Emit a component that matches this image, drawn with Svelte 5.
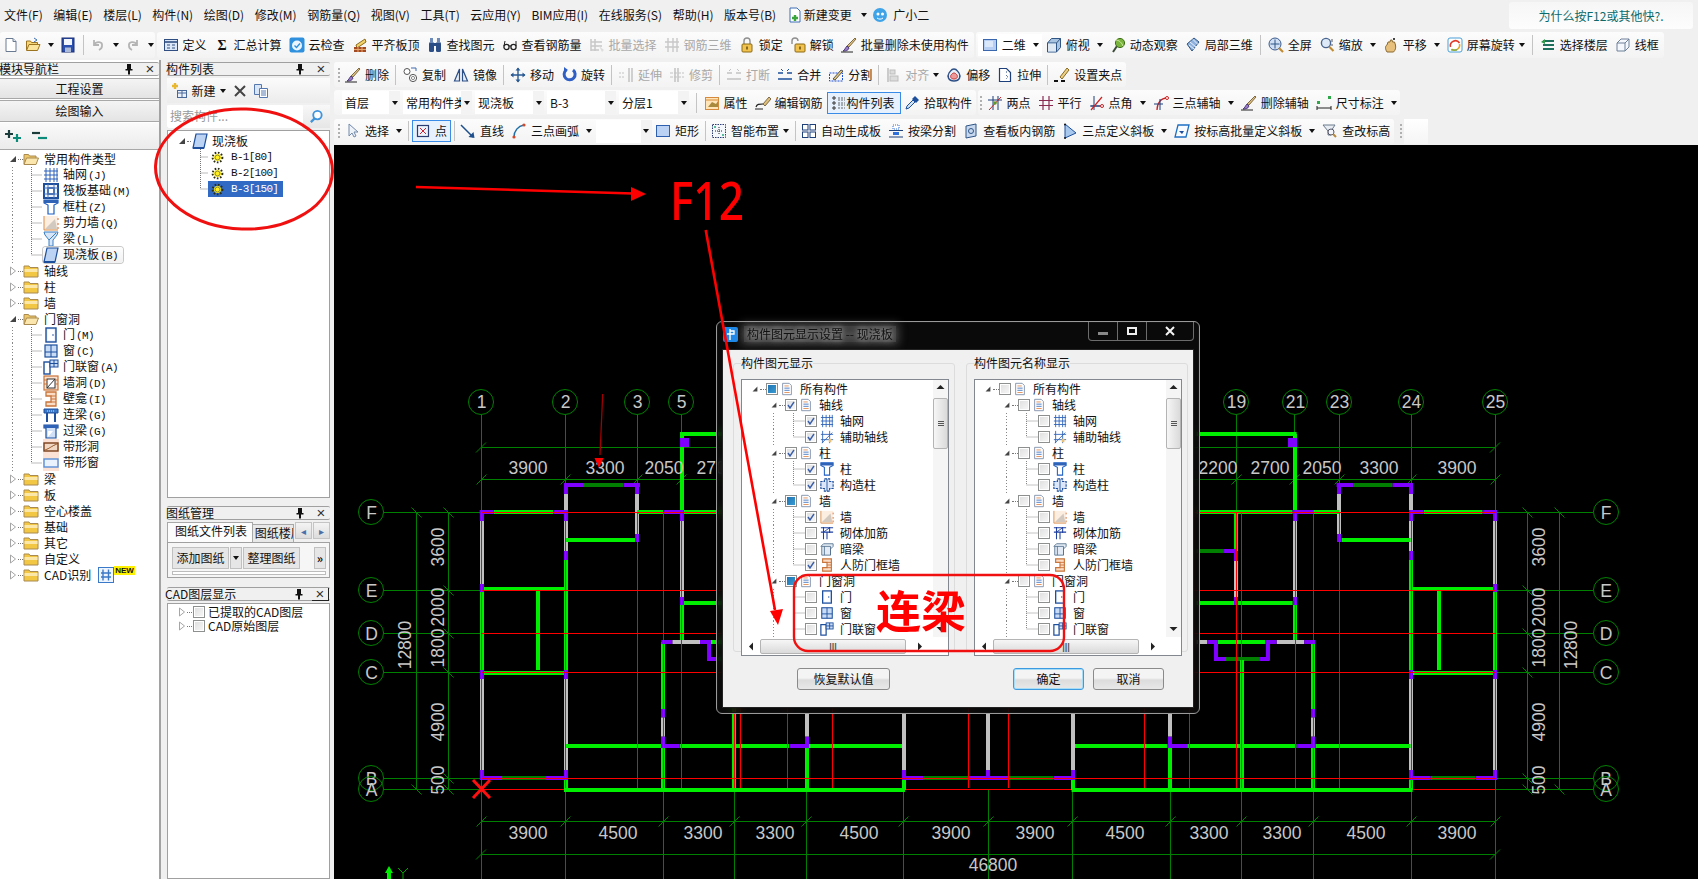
<script>
  const I = {
    doc: '<path d="M3 1.5h7l3 3v10H3z" fill="#fff" stroke="#6b7a93"/><path d="M10 1.5v3h3" fill="#dfe6f0" stroke="#6b7a93"/>',
    open: '<path d="M1.5 13V4h4l1 1.5h6V8" fill="#f6d678" stroke="#9c7420"/><path d="M1.5 13.5l2.5-6h11l-2.5 6z" fill="#fbe59c" stroke="#9c7420"/><path d="M9 1l3 2-3 2" fill="none" stroke="#3c6fb4"/>',
    save: '<rect x="2" y="1" width="12" height="14" fill="#2a4fae" stroke="#1a2f72"/><rect x="4" y="2" width="8" height="6" fill="#f2f5fb"/><rect x="5" y="10.5" width="6" height="4.5" fill="#aebbd8"/>',
    undo: '<path d="M4 3v5h5M4 8c2-4 9-4 8 1 0 2-1 3-3 4" fill="none" stroke="#b4b4b4" stroke-width="1.8"/>',
    redo: '<path d="M12 3v5H7M12 8c-2-4-9-4-8 1 0 2 1 3 3 4" fill="none" stroke="#b4b4b4" stroke-width="1.8"/>',
    define: '<rect x="1.5" y="2.5" width="13" height="11" fill="#dce7f7" stroke="#2f4d80"/><path d="M2 5h12" stroke="#2f4d80" stroke-width="1.6"/><path d="M4 8h3M9 8h3M4 11h3M9 11h3" stroke="#2f4d80"/>',
    sigma: '<text x="8" y="13" text-anchor="middle" font-size="14" font-weight="700" font-family="Liberation Serif" fill="#111">Σ</text>',
    cloud: '<rect x="0.5" y="0.5" width="15" height="15" rx="2" fill="#2f90dd"/><circle cx="8" cy="8.5" r="5" fill="#eaf5ff"/><path d="M5.5 8.5l2 2 3.5-4" fill="none" stroke="#2f90dd" stroke-width="1.4"/>',
    alignTop: '<path d="M4 8l9-6 1 3-9 6z" fill="#f3d368" stroke="#8b6a20"/><rect x="2" y="10" width="12" height="5" fill="#a34a22"/><path d="M2 12.5h12M6 10v5M10 10v5" stroke="#e7a76d"/>',
    binoc: '<rect x="2" y="5" width="5" height="10" rx="1.5" fill="#2c4e86"/><rect x="9" y="5" width="5" height="10" rx="1.5" fill="#2c4e86"/><rect x="3" y="1" width="3" height="5" fill="#6d8ab8"/><rect x="10" y="1" width="3" height="5" fill="#6d8ab8"/><rect x="6" y="6" width="4" height="3" fill="#2c4e86"/>',
    glasses: '<circle cx="4.5" cy="10" r="2.6" fill="none" stroke="#222" stroke-width="1.3"/><circle cx="11.5" cy="10" r="2.6" fill="none" stroke="#222" stroke-width="1.3"/><path d="M7 9h2M2 9l1-5M14 9V4" fill="none" stroke="#222"/>',
    batchSel: '<path d="M2 2v12M6 2v12M2 5h11M2 9h11M2 13h8" stroke="#c8c8c8" stroke-width="1.5"/><path d="M10 9l5 4-2 2z" fill="#ddd"/>',
    rebar3d: '<path d="M4 1v14M9 1v14M13 1v14M1 5h14M1 10h14" stroke="#c8c8c8" stroke-width="1.4"/>',
    lock: '<path d="M5 7V4a3 3 0 0 1 6 0v3" fill="none" stroke="#8f8f8f" stroke-width="1.4"/><rect x="3" y="7" width="10" height="8" rx="1" fill="#f1c24d" stroke="#8c6a14"/><rect x="7.3" y="9.5" width="1.4" height="3" fill="#5c4310"/>',
    unlock: '<path d="M2 7V4a3 3 0 0 1 6 0" fill="none" stroke="#8f8f8f" stroke-width="1.4"/><rect x="5" y="7" width="10" height="8" rx="1" fill="#f1c24d" stroke="#8c6a14"/><rect x="9.3" y="9.5" width="1.4" height="3" fill="#5c4310"/>',
    brush: '<path d="M14 1l1 1-7 8-2-1z" fill="#e0c078" stroke="#7d6a4a"/><path d="M6 9l2 2c-1 3-4 3-6 3 2-1 2-3 4-5z" fill="#9a7ac8" stroke="#4d3b78"/><path d="M0 15h12" stroke="#222"/>',
    plane2d: '<rect x="1.5" y="2.5" width="13" height="11" fill="#b7cff2" stroke="#3a66ad"/><rect x="3" y="4" width="8" height="6" fill="#dbe8fa"/>',
    topView: '<path d="M1.5 6l4-4.5h9v9l-4 4.5h-9z" fill="#a9c4e0" stroke="#2f5585"/><path d="M1.5 6h9v9M10.5 6l4-4.5" fill="none" stroke="#2f5585"/><rect x="2" y="6.5" width="8" height="8" fill="#dfe9f4"/>',
    orbit: '<path d="M3 15l4-6" stroke="#3a4a3a" stroke-width="2"/><circle cx="10" cy="6" r="4.6" fill="#79b53c" stroke="#3f6e18"/><path d="M6 3c3 0 6 3 7 6" fill="none" stroke="#d7eaa7"/>',
    local3d: '<path d="M2 7l7-6 5 4-7 9z" fill="#8fb1dd" stroke="#2f5585"/><path d="M5 5l6 5M8 2.5l5 5M4 8l5 4" stroke="#eaf1fa"/>',
    full: '<circle cx="7" cy="7" r="6" fill="#cfe0f4" stroke="#3b5a8c"/><path d="M7 2.5v9M2.5 7h9" stroke="#2f5585"/><path d="M11 11l4 4" stroke="#c08b30" stroke-width="2.2"/>',
    zoom: '<circle cx="7" cy="6" r="4.6" fill="#dde9f7" stroke="#49658f" stroke-width="1.4"/><path d="M10.5 10l4 4" stroke="#c08b30" stroke-width="2.2"/><path d="M13 2v3M13 7v2" stroke="#555"/>',
    pan: '<path d="M4 15c-2-3-2-6 0-7l1-3h2l.5-2h1.5l.5 2h2l1 3c.5 3 0 5-2 7z" fill="#e6c07c" stroke="#8a6a30"/><path d="M10 1l2 2M12 1l-2 2" stroke="#444"/>',
    screenRot: '<rect x="1" y="1" width="14" height="14" rx="2" fill="#fff" stroke="#4a9fd8"/><path d="M3.5 10a5 5 0 0 1 9-4" fill="none" stroke="#e23a28" stroke-width="1.6"/><path d="M12.5 7a5 5 0 0 1-8 5" fill="none" stroke="#e2a528" stroke-width="1.6"/><path d="M4 13h6" stroke="#4aa84a"/>',
    floors: '<path d="M3 4h11M3 8h11M3 12h11" stroke="#1e6f5c" stroke-width="2"/><path d="M5 2L1 5l4 2z" fill="#2f9a4a"/>',
    wire: '<path d="M2 6l4-4h8v8l-4 4H2z" fill="#f4f7fb" stroke="#6f8099"/><path d="M2 6h8v8M10 6l4-4" fill="none" stroke="#6f8099"/>',
    copy: '<circle cx="5" cy="4.5" r="3" fill="#fff" stroke="#555"/><circle cx="11" cy="11" r="3.6" fill="#fff" stroke="#555"/><circle cx="11" cy="11" r="1.6" fill="none" stroke="#888"/><path d="M9 1h5v3" fill="none" stroke="#3d6bb0"/>',
    mirror: '<path d="M6.5 2L1.5 14h5zM9.5 2l5 12h-5z" fill="#e7eef8" stroke="#2c4e86" stroke-width="1.2"/>',
    move: '<path d="M8 1v14M1 8h14" stroke="#2a5a94" stroke-width="1.4"/><path d="M8 .5l2.5 3h-5zM8 15.5l2.5-3h-5zM.5 8l3-2.5v5zM15.5 8l-3-2.5v5z" fill="#2a5a94"/>',
    rotate: '<path d="M5 3.2A5.5 5.5 0 1 0 12 3" fill="none" stroke="#2f5fc4" stroke-width="3"/><path d="M3 0l4 3-4 3z" fill="#2f5fc4"/>',
    extend: '<path d="M1 6h6M1 10h6" stroke="#c2c2c2" stroke-dasharray="2 1"/><path d="M11 1v14M14 1v14" stroke="#c2c2c2" stroke-width="1.5"/>',
    trim: '<path d="M1 6h14M1 10h14" stroke="#c2c2c2" stroke-dasharray="3 1"/><path d="M6 1v14M9 1v14" stroke="#c2c2c2" stroke-width="1.5"/>',
    breakI: '<path d="M1 6h5M10 6h5M1 12h14" stroke="#c2c2c2" stroke-width="1.5"/><path d="M5 2l-2 2M11 2l2 2" stroke="#c2c2c2"/>',
    merge: '<path d="M1 6h5M10 6h5M1 12h14" stroke="#1d4f9c" stroke-width="1.5"/><path d="M4 2l2 2M12 2l-2 2" stroke="#1d4f9c"/>',
    split: '<rect x="1.5" y="6" width="13" height="8" fill="none" stroke="#1d4fd8" stroke-dasharray="2 1"/><path d="M5 12L13 3l2 1-8 9z" fill="#e8c978" stroke="#555"/>',
    alignL: '<path d="M3 1v14" stroke="#bdbdbd" stroke-width="1.5"/><rect x="5" y="3" width="5" height="4" fill="#dcdcdc" stroke="#bdbdbd"/><rect x="5" y="9" width="8" height="5" fill="#dcdcdc" stroke="#bdbdbd"/>',
    offset: '<path d="M8 2c3 0 3 2 5 4 2 3 1 8-5 8s-7-5-5-8c2-2 2-4 5-4z" fill="#e9eff7" stroke="#2c4e86" stroke-width="1.3"/><path d="M8 6c1.500 0 2 1 3 2 1 2 0 4-3 4s-4-2-3-4c1-1 1.500-2 3-2z" fill="#ef9a9a" stroke="#c73a3a"/>',
    stretch: '<path d="M2.500 1.500h7l4 4v9h-11z" fill="#fff" stroke="#1d3f7a" stroke-width="1.200"/><path d="M9 5h2M9 8l2 2-2 2" fill="none" stroke="#1d3f7a" stroke-dasharray="1 1"/>',
    grips: '<path d="M6 10L13 1l2 2-7 9z" fill="#eccf86" stroke="#8b6a20"/><path d="M0 14h4M7 14h4" stroke="#111" stroke-width="2"/>',
    props: '<rect x="1.500" y="2.500" width="13" height="12" fill="#ffe5b8" stroke="#d68b3c"/><path d="M4 12l4-5 4 2 2-3v6z" fill="#a88b3c"/><path d="M2 5h12" stroke="#d68b3c"/>',
    pencil: '<path d="M8 9l6-7 2 2-6 7z" fill="#e0c078" stroke="#7d6a4a"/><path d="M1 12c1-3 3-3 7-3M0 14h8" fill="none" stroke="#222" stroke-width="1.200"/>',
    list: '<path d="M2 2h2v2H2zM2 7h2v2H2zM2 12h2v2H2z" fill="#fff" stroke="#333"/><path d="M7 3h7M7 5h7M7 8h7M7 10h7M7 13h7" stroke="#666" stroke-dasharray="2 1"/>',
    pick: '<path d="M2 14l1-3 6-6 2 2-6 6z" fill="#cfe2f7" stroke="#1d4f9c"/><path d="M8 4l3-3 4 4-3 3z" fill="#1d4f9c"/>',
    twoPt: '<path d="M6 1v14M11 1v14M1 5h14" stroke="#1d3f7a"/><path d="M2 15L14 2" stroke="#c22"/><circle cx="8" cy="8" r="1.800" fill="#5c9a2a"/>',
    parallel: '<path d="M5 1v14M11 1v14M1 5.500h14M1 10.500h14" stroke="#8a2a50" stroke-width="1.200"/>',
    angle: '<path d="M5 1v14M1 11h14M2 11h12" stroke="#1d3f7a"/><path d="M2 15L13 2" stroke="#c22" stroke-width="1.200"/><circle cx="13" cy="11" r="1.500" fill="#fff" stroke="#c22"/>',
    arcAux: '<path d="M4 15C4 8 8 3 14 3" fill="none" stroke="#c22" stroke-width="1.300"/><path d="M7 4v11M1 9h9" stroke="#1d3f7a"/><circle cx="14" cy="3" r="1.500" fill="#fff" stroke="#c22"/>',
    dim: '<rect x="1" y="6" width="3" height="3" fill="#2fa84a"/><rect x="12" y="1" width="3" height="3" fill="#2fa84a"/><path d="M1 11v4M15 11v4M1 13h14" stroke="#222"/>',
    cursor: '<path d="M4 1v12l3-3 2 4 2-1-2-4h4z" fill="#eef3fa" stroke="#7288aa"/>',
    point: '<rect x="2.500" y="2.500" width="11" height="11" fill="#eef3fb" stroke="#2b3c73" stroke-width="1.200"/><path d="M5 5l6 6M11 5l-6 6" stroke="#c23"/>',
    lineI: '<path d="M1 2l12 12" stroke="#1d4f8c" stroke-width="1.500"/><path d="M14.500 15l-1-6-5 5z" fill="#1d4f8c"/>',
    arc3: '<path d="M3 14C3 8 7 3 13 2" fill="none" stroke="#1d6fa8" stroke-width="1.500"/><circle cx="3" cy="14" r="1.600" fill="#d24a2a"/><circle cx="13" cy="2" r="1.600" fill="#d24a2a"/>',
    rectI: '<rect x="1.500" y="2.500" width="13" height="11" fill="#bcd2f4" stroke="#2e5fae"/>',
    smart: '<rect x="1.500" y="1.500" width="13" height="13" fill="#f4f8fd" stroke="#2b3c73" stroke-dasharray="1.500 1"/><path d="M8 4v8M4 8h8" stroke="#222" stroke-dasharray="1 1"/><circle cx="4" cy="4" r="1" fill="#2a7"/><circle cx="12" cy="12" r="1" fill="#2a7"/>',
    auto: '<rect x="1.500" y="1.500" width="5.500" height="5.500" fill="#fff" stroke="#1d3f7a"/><rect x="9" y="1.500" width="5.500" height="5.500" fill="#fff" stroke="#1d3f7a"/><rect x="1.500" y="9" width="5.500" height="5.500" fill="#fff" stroke="#1d3f7a"/><rect x="9" y="9" width="5.500" height="5.500" fill="#fff" stroke="#1d3f7a"/>',
    beamSplit: '<rect x="5" y="2" width="6" height="4" fill="#fff" stroke="#2f6fdc" stroke-dasharray="1 1"/><rect x="5" y="9" width="6" height="3" fill="#2f6fdc"/><path d="M1 7.500h14M1 14h14" stroke="#1d3f7a"/>',
    slabView: '<path d="M3 3l10-2v12L3 15z" fill="#c7d8ee" stroke="#2f5585"/><circle cx="8" cy="8" r="2.500" fill="none" stroke="#2f5585"/>',
    slope3: '<path d="M3 1v14l11-5z" fill="#a8c8ee" stroke="#1d4f9c"/><circle cx="3" cy="1.500" r="1" fill="#111"/><circle cx="3" cy="15" r="1" fill="#111"/>',
    slopeBatch: '<path d="M4 2h11l-3 12H1z" fill="#f8fbff" stroke="#1d6fc4" stroke-width="1.300"/><path d="M5 8h5l-2 3z" fill="#1d4f9c"/>',
    elev: '<path d="M1 2h12l-4 6v4H6V8z" fill="#e8edf4" stroke="#6b7a8c"/><circle cx="9" cy="9" r="3" fill="#f2f6fb" stroke="#556"/><path d="M11 11l3 3" stroke="#b58a3c" stroke-width="2"/>',
    folderOpen: '<path d="M1 13V3.500h4.500l1 1.500H13V7" fill="#eec76b" stroke="#a98a50"/><path d="M1 13.500L3.500 7H15.500L13 13.500z" fill="#fbe7ad" stroke="#a98a50"/>',
    folder: '<path d="M1 14V3h5l1 1.500h8V14z" fill="#f2c744" stroke="#a98a50"/><path d="M1.500 6h13v3h-13z" fill="#fbe8a8"/>',
    axis: '<path d="M3 1v14M7 1v14M11 1v14M14 1v14M1 4h14M1 8h14M1 12h14" stroke="#2f63b8"/>',
    raft: '<rect x="1" y="1" width="14" height="14" fill="#eef3fb" stroke="#1d4f9c" stroke-width="2"/><rect x="5" y="5" width="6" height="6" fill="#fff" stroke="#1d4f9c" stroke-width="1.500"/><path d="M1 5h14M1 11h14M5 1v14M11 1v14" stroke="#4a76bc"/>',
    col: '<path d="M1 1h14v3l-4 2v9H5V6L1 4z" fill="#fff" stroke="#1d5fc4" stroke-width="1.200"/><path d="M1 1h14v3H1z" fill="#2f63b8"/>',
    wall: '<rect x="1" y="1" width="14" height="14" fill="#fdeee2"/><path d="M2 14L14 14 12 4z" fill="#c7bfb8" opacity=".8"/><path d="M1 1v14h14" fill="none" stroke="#d98d4a"/><path d="M15 3v2M15 8v2M15 12v2" stroke="#d9692a"/>',
    beam: '<path d="M1 1h14l-1 3-4 5v6H6V9L2 4z" fill="#d7e6f8" stroke="#3a7fc4"/><path d="M6 9L13 2" stroke="#3a7fc4"/>',
    slab: '<path d="M4 1h11l-3 14H1z" fill="#bcd3f4" stroke="#1d4f9c" stroke-width="1.200"/><path d="M1 15h11" stroke="#1d4f9c" stroke-width="2"/>',
    door: '<rect x="3" y="1" width="10" height="14" fill="#d9e6f9" stroke="#1d4f9c" stroke-width="1.400"/><rect x="4.500" y="2.500" width="7" height="11" fill="#fff"/><circle cx="10" cy="8" r=".8" fill="#1d4f9c"/>',
    win: '<rect x="2" y="2" width="12" height="12" fill="#c9dcf6" stroke="#1d4f9c" stroke-width="1.200"/><path d="M8 2v12M2 9h12" stroke="#1d4f9c"/>',
    doorWin: '<rect x="1" y="3" width="6" height="12" fill="#fff" stroke="#1d4f9c" stroke-width="1.400"/><rect x="7" y="1" width="8" height="7" fill="#c9dcf6" stroke="#1d4f9c"/><path d="M11 1v7M7 4.500h8" stroke="#1d4f9c"/>',
    hole: '<rect x="1" y="1" width="14" height="14" fill="#fbe2cf" stroke="#c9743a" stroke-width="1.200"/><rect x="4" y="4" width="8" height="9" fill="#fff" stroke="#333"/><path d="M4 13l8-9" stroke="#333"/><path d="M1 5h3M1 9h3M12 5h3M12 9h3" stroke="#c9743a"/>',
    niche: '<path d="M3 1h10v14H3v-4h5V5H3z" fill="#fbdcc4" stroke="#c9743a" stroke-width="1.300"/><path d="M8 5h5M8 8h5M8 11h5" stroke="#c9743a"/>',
    coupling: '<path d="M1 2h14v4H1z" fill="#3a78c8" stroke="#1d4f9c"/><path d="M4 6v9M12 6v9" stroke="#1d4f9c" stroke-width="2"/><path d="M4 4h8" stroke="#cfe0f7" stroke-dasharray="1 1"/>',
    lintel: '<path d="M1 2h14v3h-2v10H3V5H1z" fill="#cfe0f7" stroke="#1d4f9c" stroke-width="1.200"/><path d="M1 2h14v3H1z" fill="#2f63b8"/><path d="M5 8l5 0-5 6z" fill="#fff"/>',
    strip: '<rect x="0" y="0" width="16" height="16" fill="#fbe2d4"/><rect x="1" y="4" width="14" height="8" fill="#f0d8c4" stroke="#7a3f1c" stroke-width="1.400"/><path d="M2 11c4-1 8-5 12-6" stroke="#a9683a"/>',
    stripWin: '<rect x="0" y="0" width="16" height="16" fill="#fbe2d4"/><rect x="1" y="4" width="14" height="8" fill="#eaf3fd" stroke="#5a8fd8" stroke-width="1.400"/>',
    gear: '<circle cx="8" cy="8" r="4.300" fill="#ffee20"/><circle cx="8" cy="8" r="3" fill="none" stroke="#5a5a20" stroke-width=".8"/><circle cx="8" cy="8" r="6" fill="none" stroke="#2c2c10" stroke-width="2.400" stroke-dasharray="2 2"/>',
    cadBox: '<rect x="0.500" y="0.500" width="15" height="15" fill="#eef5fe" stroke="#3a78c8"/><path d="M5 2.500v11M10.500 2.500v11M3 6h10M3 10h10" stroke="#3a78c8" stroke-width="1.400"/>',
    docL: '<path d="M3 1.500h7.500l2.500 2.500v10.500H3z" fill="#fff" stroke="#7d8da8"/><path d="M5 4.500h5" stroke="#e08a50"/><path d="M5 7h6M5 9.500h6" stroke="#3f73bf"/><path d="M5 12h6" stroke="#e08a50"/>',
    axisAux: '<path d="M3 1v14M11 1v14M1 5h14M1 11h14" stroke="#2f63b8"/><path d="M2 15L14 3" stroke="#2f63b8"/><rect x="10" y="10" width="3" height="4" fill="#e9c27a"/>',
    gz: '<path d="M5 1h6v3h4v8h-4v3H5v-3H1V4h4z" fill="#dce8f9" stroke="#1d4f9c" stroke-width="1.300" stroke-dasharray="3 1"/><path d="M8 1v14" stroke="#1d4f9c"/>',
    masonry: '<path d="M1 2h14M1 7h14M4 1v14M11 1v7M8 7v8" stroke="#1d3fa0" stroke-width="1.200"/><path d="M4 7L11 2" stroke="#1d3fa0"/>',
    darkBeam: '<path d="M1 5l3-3h11v3l-3 3v7H2V5z" fill="#e3ecf6" stroke="#55718f"/><path d="M2 5h10v10" fill="none" stroke="#55718f"/><path d="M5 5v10" stroke="#55718f"/>'
  };

  const it = (i, t, o = {}) => ({ i, t, ...o });
  const SEP = { sep: true };

  const menu = ['文件(F)', '编辑(E)', '楼层(L)', '构件(N)', '绘图(D)', '修改(M)', '钢筋量(Q)', '视图(V)', '工具(T)', '云应用(Y)', 'BIM应用(I)', '在线服务(S)', '帮助(H)', '版本号(B)'];

  const file = [it('doc', ''), it('open', '', { c: 1 }), it('save', ''), SEP, it('undo', '', { c: 1 }), it('redo', '', { c: 1 })];
  const main1 = [
    it('define', '定义'), it('sigma', '汇总计算'), it('cloud', '云检查'), it('alignTop', '平齐板顶'), it('binoc', '查找图元'),
    it('glasses', '查看钢筋量'), it('batchSel', '批量选择', { d: 1 }), it('rebar3d', '钢筋三维', { d: 1 }), it('lock', '锁定'), it('unlock', '解锁'), it('brush', '批量删除未使用构件')
  ];
  const view1 = [
    it('plane2d', '二维', { c: 1, white: 1 }), it('topView', '俯视', { c: 1 }), it('orbit', '动态观察'), it('local3d', '局部三维'), SEP,
    it('full', '全屏'), it('zoom', '缩放', { c: 1 }), it('pan', '平移', { c: 1 }), it('screenRot', '屏幕旋转', { c: 1, tight: 1 }), SEP, it('floors', '选择楼层'), it('wire', '线框')
  ];
  const edit = [
    it('brush', '删除'), SEP, it('copy', '复制'), it('mirror', '镜像'), SEP, it('move', '移动'), it('rotate', '旋转'), SEP,
    it('extend', '延伸', { d: 1 }), it('trim', '修剪', { d: 1 }), SEP, it('breakI', '打断', { d: 1 }), it('merge', '合并'), it('split', '分割'), SEP,
    it('alignL', '对齐', { d: 1, c: 1, tight: 1 }), it('offset', '偏移'), it('stretch', '拉伸'), SEP, it('grips', '设置夹点')
  ];
  const combos = [
    { t: '首层', w: 58 }, { t: '常用构件类型', w: 69 }, { t: '现浇板', w: 69 }, { t: 'B-3', w: 69 }, { t: '分层1', w: 70 }
  ];
  const layer = [it('props', '属性'), it('pencil', '编辑钢筋'), it('list', '构件列表', { on: 1, narrow: 1 }), it('pick', '拾取构件')];
  const aux = [
    it('twoPt', '两点'), it('parallel', '平行'), it('angle', '点角', { c: 1 }), it('arcAux', '三点辅轴', { c: 1 }), it('brush', '删除辅轴'), it('dim', '尺寸标注', { c: 1 })
  ];
  const draw1 = [it('cursor', '选择', { c: 1 }), SEP, it('point', '点', { on: 1 }), SEP, it('lineI', '直线'), it('arc3', '三点画弧', { c: 1 })];
  const draw2 = [
    it('rectI', '矩形'), SEP, it('smart', '智能布置', { c: 1, tight: 1 }), SEP, it('auto', '自动生成板'), it('beamSplit', '按梁分割'), it('slabView', '查看板内钢筋'),
    it('slope3', '三点定义斜板', { c: 1 }), it('slopeBatch', '按标高批量定义斜板', { c: 1 }), it('elev', '查改标高')
  ];

  const navTree = [
    { t: '常用构件类型', open: 1, kids: [['axis', '轴网', '(J)'], ['raft', '筏板基础', '(M)'], ['col', '框柱', '(Z)'], ['wall', '剪力墙', '(Q)'], ['beam', '梁', '(L)'], ['slab', '现浇板', '(B)', 1]] },
    { t: '轴线' }, { t: '柱' }, { t: '墙' },
    { t: '门窗洞', open: 1, kids: [['door', '门', '(M)'], ['win', '窗', '(C)'], ['doorWin', '门联窗', '(A)'], ['hole', '墙洞', '(D)'], ['niche', '壁龛', '(I)'], ['coupling', '连梁', '(G)'], ['lintel', '过梁', '(G)'], ['strip', '带形洞', ''], ['stripWin', '带形窗', '']] },
    { t: '梁' }, { t: '板' }, { t: '空心楼盖' }, { t: '基础' }, { t: '其它' }, { t: '自定义' }, { t: 'CAD识别', cad: 1 }
  ];

  const dlgRows = [
    [0, '所有构件', 'docL', 'm'], [1, '轴线', 'docL', 'c'], [2, '轴网', 'axis', 'c'], [2, '辅助轴线', 'axisAux', 'c'],
    [1, '柱', 'docL', 'c'], [2, '柱', 'col', 'c'], [2, '构造柱', 'gz', 'c'], [1, '墙', 'docL', 'm'], [2, '墙', 'wall', 'c'],
    [2, '砌体加筋', 'masonry', 'n'], [2, '暗梁', 'darkBeam', 'n'], [2, '人防门框墙', 'niche', 'c'], [1, '门窗洞', 'docL', 'm'],
    [2, '门', 'door', 'n'], [2, '窗', 'win', 'n'], [2, '门联窗', 'doorWin', 'n']
  ];

  // plan geometry, in page pixels. the building is symmetric about this sum
  const M = 1976.6;
  const B = '#00ee00', D = '#007f00', P = '#7f00ff', G = '#c0c0c0';
  const Y = { F: 512, E: 590, D: 633, C: 672, B: 778, A: 789 };

  const chains = [
    ['v', 481.7, [510, P, 521, G, 584, P, 592, B, 670, P, 679, G, 770, P, 780]],
    ['h', 511.7, [479.7, P, 494, B, 553, P, 567]],
    ['v', 566, [483, P, 494, G, 510, P, 521, G, 551, P, 560, B, 670, P, 679, G, 770, P, 780, B, 790]],
    ['h', 485, [564, P, 584, D, 623.3, P, 640]],
    ['v', 637.3, [483, P, 494, G, 534, P, 542]],
    ['h', 540, [566, B, 635]],
    ['h', 589.3, [481.7, B, 565]],
    ['v', 538, [591, B, 670]],
    ['h', 673.3, [481.7, B, 565]],
    ['h', 778, [481.7, P, 501, D, 546, P, 567]],
    ['h', 511.7, [637, B, 663.3, P, 684, B, 780]],
    ['v', 682, [434, B, 510, P, 521, G, 597, P, 605, B, 642]],
    ['h', 434, [680, B, 780]],
    ['h', 602.7, [684, B, 780]],
    ['h', 642, [661.3, P, 672.3, G, 700, P, 711, B, 758.6, P, 769.6, G, 780]],
    ['v', 709, [642, P, 660]],
    ['v', 760.6, [642, P, 660]],
    ['h', 659.3, [707, P, 717.6, D, 751.6, P, 762.6]],
    ['v', 663.3, [642, B, 709, P, 717.3, G, 736.7, P, 746.7, B, 790]],
    ['h', 745.7, [566, B, 661, P, 680, B, 789.3, P, 809, B, 903]],
    ['v', 734.3, [660, B, 790]],
    ['v', 806.7, [714, G, 736.7, P, 746, B, 790]],
    ['v', 904, [714, G, 770, P, 780, B, 790]],
    ['v', 988.3, [714, G, 770, P, 778]],
    ['h', 778.3, [904, P, 923.3, D, 968.3, P, 990]],
    ['h', 789.8, [564, B, 905]],
    ['v', 740.3, [511, B, 551, P, 561, G, 597, P, 605]],
    ['h', 551, [740, P, 753.6, D, 780]]
  ];

  function toRects(list) {
    const out = [];
    for (const [dir, at, pts] of list) {
      for (let n = 0; n + 2 < pts.length; n += 2) {
        const a = pts[n], fill = pts[n + 1], b = pts[n + 2];
        for (const flip of [false, true]) {
          if (dir === 'v') {
            const x = flip ? M - at : at;
            out.push({ x: Math.round(x - 2), y: a, w: 4, h: b - a, fill });
          } else {
            const x1 = flip ? M - b : a;
            out.push({ x: x1, y: Math.round(at - 2), w: b - a, h: 4, fill });
          }
        }
      }
    }
    // keep bright segments under purple joints
    return out.sort((p, q) => (p.fill === P) - (q.fill === P));
  }
  const walls = toRects(chains);

  const redHalf = [481.3, 565.3, 637.3, 663.3, 681.3, 734.9, 740.3, 787.3, 832.3, 968.3];
  const redV = [...redHalf, ...redHalf.map((x) => M - x)].map((x) => Math.floor(x) + 0.5);
  const axesTop = [481.3, 565.3, 637.3, 681.3, 1236.3, 1294.7, 1339.3, 1411.3, 1495.3].map((x) => Math.floor(x) + 0.5);
  const axesBot = [481.3, 565.3, 663.3, 734.3, 806.3, 903.3, 988.3, 1072.3, 1170.3, 1241.7, 1313.3, 1411.3, 1495.3].map((x) => Math.floor(x) + 0.5);
  const rows = Object.values(Y).map((y) => y + 0.5);
  const redRows = rows.slice(0, -1);
  const lastRow = rows[rows.length - 1];

  const topNums = [['1', 481], ['2', 565], ['3', 637], ['5', 681], ['19', 1236], ['21', 1295], ['23', 1339], ['24', 1411], ['25', 1495]];
  const letters = Object.entries(Y);
  const topDims = [[528, '3900'], [605, '3300'], [664, '2050'], [716, '2700'], [1218, '2200'], [1270, '2700'], [1322, '2050'], [1379, '3300'], [1457, '3900']];
  const botDims = [[528, '3900'], [618, '4500'], [703, '3300'], [775, '3300'], [859, '4500'], [951, '3900'], [1035, '3900'], [1125, '4500'], [1209, '3300'], [1282, '3300'], [1366, '4500'], [1457, '3900']];
  const sideDims = [[547, '3600'], [607, '2000'], [648, '1800'], [722, '4900'], [780, '500']];
</script>

{#snippet icon(name)}
  <svg class="ic" viewBox="0 0 16 16">{@html I[name]}</svg>
{/snippet}

{#snippet items(list)}
  {#each list as a}
    {#if a.sep}
      <span class="sep"></span>
    {:else}
      <span class="item" class:off={a.d} class:on={a.on} class:white={a.white} class:narrow={a.narrow}>
        {@render icon(a.i)}
        {#if a.t}<span>{a.t}</span>{/if}
        {#if a.c}<i class="caret" class:tight={a.tight}></i>{/if}
      </span>
    {/if}
  {/each}
{/snippet}

{#snippet combo(text, w)}
  <span class="combo" style="width:{w}px">
    <span class="combo-text">{text}</span>
    <span class="combo-btn"><i class="caret flush"></i></span>
  </span>
{/snippet}

{#snippet ptitle(text, boxed)}
  <div class="ptitle">
    <span class="ptext">{text}</span>
    <svg class="pin" viewBox="0 0 10 12"><path d="M3 1h4v5h1.500v1.500h-2.500v4h-2v-4H1.500V6H3z" fill="#111" /></svg>
    <span class="pclose" class:boxed>×</span>
  </div>
{/snippet}

{#snippet expander(open)}
  <svg class="exp" viewBox="0 0 10 10">
    {#if open}<path d="M8 2v6H2z" fill="#444" />{:else}<path d="M2.500 1l5 4-5 4z" fill="#fff" stroke="#a6a6a6" />{/if}
  </svg>
{/snippet}

{#snippet listbox(plain)}
  <div class="lbox">
    <div class="ltree">
      {#each dlgRows as [lv, text, ic, st], n}
        {@const state = plain ? 'n' : st}
        <div class="drow lv{lv}">
          {#if lv < 2}
            {@render expander(true)}
            <span class="ddots"></span>
          {:else}
            <svg class="dguide" viewBox="0 0 63 16">
              <path d="M31.500 0V16" stroke="#888" stroke-dasharray="1 2" />
              <path d={dlgRows[n + 1] && dlgRows[n + 1][0] === 2 ? 'M51.500 0V16M51.500 8H63' : 'M51.500 0V8H63'} stroke="#888" stroke-dasharray="1 1" fill="none" />
            </svg>
          {/if}
          <span class="chk {state}">
            {#if state === 'c'}<svg viewBox="0 0 10 10"><path d="M2 5l2 3 4-6" fill="none" stroke="#3a5ea8" stroke-width="1.400" /></svg>{/if}
          </span>
          {@render icon(ic)}
          <span class="dlabel">{text}</span>
        </div>
      {/each}
    </div>
    <div class="vbar">
      <svg class="arrow" viewBox="0 0 15 16"><path d="M7.500 5l4 4h-8z" fill="#222" /></svg>
      <div class="vthumb"><span></span><span></span><span></span></div>
      <div class="grow"></div>
      <svg class="arrow" viewBox="0 0 15 16"><path d="M7.500 10l4-4h-8z" fill="#222" /></svg>
    </div>
    <div class="hbar">
      <svg class="arrow" viewBox="0 0 16 15"><path d="M5 7.500l4-4v8z" fill="#222" /></svg>
      <div class="hthumb">|||</div>
      <svg class="arrow last" viewBox="0 0 16 15"><path d="M10 7.500l-4-4v8z" fill="#222" /></svg>
    </div>
  </div>
{/snippet}

<div class="app">
  <div class="menubar">
    <nav class="menu">
      {#each menu as m}<span>{m}</span>{/each}
      <span class="item mi">
        <svg class="ic" viewBox="0 0 16 16"><path d="M3 1h7l3 3v11H3z" fill="#fff" stroke="#3c6fb4" /><path d="M8 8v6M5 11h6" stroke="#3aa53a" stroke-width="2.400" /></svg>
        <span>新建变更</span>
        <i class="caret"></i>
      </span>
      <span class="item mi second">
        <svg class="ic" viewBox="0 0 16 16"><circle cx="8" cy="8" r="7" fill="#3fa3e8" /><circle cx="6" cy="7" r="1.500" fill="#fff" /><circle cx="10.500" cy="7" r="1.500" fill="#fff" /><path d="M5 11c2 1.500 4 1.500 6 0" stroke="#fff" fill="none" /></svg>
        <span>广小二</span>
      </span>
    </nav>
    <div class="tip">为什么按F12或其他快?.</div>
  </div>

  <div class="toolrow top">
    <div class="pill first">{@render items(file)}</div>
    <div class="pill main1">{@render items(main1)}</div>
    <div class="pill view1">{@render items(view1)}</div>
  </div>

  <div class="body">
    <aside class="nav">
      {@render ptitle('模块导航栏')}
      <button class="big first-b">工程设置</button>
      <button class="big">绘图输入</button>
      <div class="navtools">
        <svg viewBox="0 0 22 14" width="22" height="14"><path d="M5 1v8M1 5h8" stroke="#1c3c3c" stroke-width="2.200" /><path d="M13 5v8M9 9h8" stroke="#0c8a7a" stroke-width="2.200" /></svg>
        <svg viewBox="0 0 22 14" width="22" height="14"><path d="M1 4h8" stroke="#1c3c3c" stroke-width="2.200" /><path d="M7 9h9" stroke="#0c8a7a" stroke-width="2.200" /></svg>
      </div>
      <div class="tree">
        {#each navTree as g}
          <div class="trow">
            <span class="lead">{@render expander(g.open)}<span class="ddots nav"></span></span>
            <svg class="ic folder" viewBox="0 0 16 16">{@html I[g.open ? 'folderOpen' : 'folder']}</svg>
            <span class="tlabel">{g.t}</span>
            {#if g.cad}
              <svg class="ic cadbox" viewBox="0 0 16 16">{@html I.cadBox}</svg>
              <b class="new">NEW</b>
            {/if}
          </div>
          {#if g.kids}
            {#each g.kids as [ic, label, key, sel], n}
              <div class="trow">
                <svg class="guide" viewBox="0 0 43 16">
                  <path d="M12.500 0V16" stroke="#888" stroke-dasharray="1 2" />
                  <path d={n === g.kids.length - 1 ? 'M31.500 0V8H42' : 'M31.500 0V16M31.500 8H42'} stroke="#777" stroke-dasharray="1 1" fill="none" />
                </svg>
                <span class="node" class:sel>
                  {@render icon(ic)}
                  <span class="kid">{label}<em>{key}</em></span>
                </span>
              </div>
            {/each}
          {/if}
        {/each}
      </div>
    </aside>

    <section class="list">
      {@render ptitle('构件列表')}
      <div class="listtools">
        <span class="item">
          <svg class="ic" viewBox="0 0 16 16"><path d="M3 0v6M0 3h6" stroke="#e8b830" stroke-width="2.400" /><rect x="5.500" y="7.500" width="9" height="7" fill="#eaf1fb" stroke="#49689a" /><path d="M6 10h8M10 8v6" stroke="#49689a" /></svg>
          <span>新建</span>
          <i class="caret tight"></i>
        </span>
        <svg class="x" viewBox="0 0 14 14"><path d="M2 2l10 10M12 2L2 12" stroke="#444" stroke-width="2" /></svg>
        <svg class="ic" viewBox="0 0 16 16"><path d="M1.500 1.500h7v10h-7z" fill="#d9e6f7" stroke="#5578b0" /><path d="M6.500 5.500h8v9h-8z" fill="#fff" stroke="#5578b0" /><path d="M8 8h5M8 10h5M8 12h5" stroke="#5578b0" /></svg>
      </div>
      <div class="search">
        <span class="sfield">搜索构件...</span>
        <svg class="sbtn" viewBox="0 0 16 16"><circle cx="9" cy="6.500" r="4.500" fill="#fff" stroke="#3f94dc" stroke-width="2" /><path d="M6 10l-4 4" stroke="#3f94dc" stroke-width="2.400" /></svg>
      </div>
      <div class="ctree">
        <div class="crow root">
          <svg class="exp" viewBox="0 0 10 10"><path d="M8 2v6H2z" fill="#444" /></svg>
          <span class="ddots"></span>
          {@render icon('slab')}
          <span class="croot">现浇板</span>
        </div>
        {#each [['B-1[80]'], ['B-2[100]'], ['B-3[150]', 1]] as [label, sel], n}
          <div class="crow">
            <svg class="cguide" viewBox="0 0 8 16"><path d={n === 2 ? 'M.5 0V8H8' : 'M.5 0V16M.5 8H8'} stroke="#777" stroke-dasharray="1 1" fill="none" /></svg>
            <span class="cnode" class:sel>
              <svg class="gear" viewBox="0 0 16 16">{@html I.gear}</svg>
              <span>{label}</span>
            </span>
          </div>
        {/each}
      </div>

      <div class="ptitle second">
        <span class="ptext">图纸管理</span>
        <svg class="pin" viewBox="0 0 10 12"><path d="M3 1h4v5h1.500v1.500h-2.500v4h-2v-4H1.500V6H3z" fill="#111" /></svg>
        <span class="pclose">×</span>
      </div>
      <div class="tabs">
        <span class="tab active">图纸文件列表</span>
        <span class="tab">图纸楼层</span>
        <span class="tabnav"><i>◂</i><i>▸</i></span>
      </div>
      <div class="tabbody">
        <div class="drawbtns">
          <span class="dbtn">添加图纸</span>
          <span class="dbtn small"><i class="caret flush"></i></span>
          <span class="dbtn">整理图纸</span>
          <span class="dbtn more">»</span>
        </div>
        <div class="thinbar"></div>
      </div>

      <div class="ptitle third">
        <span class="ptext cad">CAD图层显示</span>
        <svg class="pin" viewBox="0 0 10 12"><path d="M3 1h4v5h1.500v1.500h-2.500v4h-2v-4H1.500V6H3z" fill="#111" /></svg>
        <span class="pclose boxed">×</span>
      </div>
      <div class="cadtree">
        {#each ['已提取的CAD图层', 'CAD原始图层'] as t}
          <div class="cadrow">
            {@render expander(false)}
            <span class="ddots"></span>
            <span class="chk n"></span>
            <span>{t}</span>
          </div>
        {/each}
      </div>
    </section>

    <main class="work">
      <div class="toolrow r2">
        <div class="pill">
          <i class="grip"></i>
          {@render items(edit)}
        </div>
      </div>
      <div class="toolrow r3">
        <div class="pill left">
          {#each combos as c}{@render combo(c.t, c.w)}{/each}
          <span class="sep"></span>
          {@render items(layer)}
        </div>
        <div class="pill aux">
          <i class="grip"></i>
          {@render items(aux)}
        </div>
      </div>
      <div class="toolrow r4">
        <div class="pill">
          <i class="grip"></i>
          {@render items(draw1)}
          {@render combo('', 56)}
          {@render items(draw2)}
        </div>
        <i class="grip lone"></i>
        <span class="endcap"></span>
      </div>

      <svg class="canvas" viewBox="334 145 1364 734" width="1364" height="734">
        <g stroke="#008000" fill="none">
          {#each axesTop as x}<path d="M{x} 414V512" />{/each}
          {#each axesBot as x}<path d="M{x} 790V879" />{/each}
          <path d="M481.500 512V790M1495.500 512V790" />
          {#each rows as y}<path d="M384 {y}H481M1495 {y}H1593" />{/each}
          <path d="M481 447.500H1496M481 479.500H1496M481 821.500H1496M481 854.500H1496" />
          <path d="M416.500 512V790M448.500 512V790M1527.500 512V790M1559.500 512V790" />
          {#each axesTop as x}<path d="M{x - 5} 484.500L{x + 5} 474.500" />{/each}
          {#each axesBot as x}<path d="M{x - 5} 826.500L{x + 5} 816.500" />{/each}
          <path d="M476 452.500L486 442.500M1490 452.500L1500 442.500M476 859.500L486 849.500M1490 859.500L1500 849.500" />
          {#each rows as y}
            <path d="M443.500 {y - 5}L453.500 {y + 5}M1522.500 {y - 5}L1532.500 {y + 5}" />
          {/each}
          <path d="M411.500 507.500L421.500 517.500M411.500 784.500L421.500 794.500M1554.500 507.500L1564.500 517.500M1554.500 784.500L1564.500 794.500" />
        </g>

        <path d="M481 {lastRow}H1496" stroke="#ff0000" fill="none" />

        {#each walls as r}
          <rect x={r.x} y={r.y} width={r.w} height={r.h} fill={r.fill} />
        {/each}
        <rect x="680" y="438" width="9" height="9" fill={P} />
        <rect x="1288" y="438" width="9" height="9" fill={P} />

        <g stroke="#ff0000" fill="none">
          {#each redRows as y}<path d="M481 {y}H1496" />{/each}
          {#each redV as x}<path d="M{x} 512V788" />{/each}
        </g>

        <path d="M473 780l17 18M490 780l-17 18" stroke="#ff1010" stroke-width="3" />

        <g class="num">
          {#each topNums as [n, x]}
            <circle cx={x} cy="402" r="12.500" fill="#000" stroke="#008000" />
            <text x={x + 0.5} y="402">{n}</text>
          {/each}
          {#each letters as [n, y]}
            <circle cx="371" cy={y} r="12.500" fill="none" stroke="#008000" />
            <text x="371.500" y={y + 0.5}>{n}</text>
            <circle cx="1606" cy={y} r="12.500" fill="none" stroke="#008000" />
            <text x="1606" y={y + 0.5}>{n}</text>
          {/each}
          {#each topDims as [x, n]}<text {x} y="468">{n}</text>{/each}
          {#each botDims as [x, n]}<text {x} y="833">{n}</text>{/each}
          <text x="993" y="865">46800</text>
          {#each sideDims as [y, n]}
            <text x="437.500" {y} transform="rotate(-90 437.500 {y})">{n}</text>
            <text x="1538.500" {y} transform="rotate(-90 1538.500 {y})">{n}</text>
          {/each}
          <text x="405" y="645" transform="rotate(-90 405 645)">12800</text>
          <text x="1571" y="645" transform="rotate(-90 1571 645)">12800</text>
        </g>

        <path d="M389 866l4 7h-2v6h-4v-6h-2z" fill="#00ee00" />
        <path d="M398 868l5 5 5-5M403 873v6" stroke="#00a000" fill="none" />
      </svg>
    </main>
  </div>

  <div class="dialog">
    <div class="dtitle">
      <svg class="dicon" viewBox="0 0 15 15"><rect width="15" height="15" rx="2" fill="#1e88e8" /><path d="M7 2v11M7 4h4v3H4" fill="none" stroke="#fff" stroke-width="1.400" /></svg>
      <span class="dcaption">构件图元显示设置 -- 现浇板</span>
      <div class="winbtns">
        <span class="wb"><i class="wmin"></i></span>
        <span class="wb"><i class="wmax"></i></span>
        <span class="wb wide"><svg viewBox="0 0 10 10" width="10" height="10"><path d="M1 1l8 8M9 1l-8 8" stroke="#f4f4f4" stroke-width="2" /></svg></span>
      </div>
    </div>
    <div class="client">
      <div class="groups">
        <fieldset>
          <legend>构件图元显示</legend>
          {@render listbox(false)}
        </fieldset>
        <fieldset>
          <legend>构件图元名称显示</legend>
          {@render listbox(true)}
        </fieldset>
      </div>
      <div class="dbuttons">
        <button class="wbtn reset">恢复默认值</button>
        <button class="wbtn ok">确定</button>
        <button class="wbtn">取消</button>
      </div>
    </div>
  </div>

  <svg class="marks" viewBox="0 0 1698 879" width="1698" height="879">
    <ellipse cx="244" cy="169" rx="88.500" ry="60" fill="none" stroke="#f01010" stroke-width="3" transform="rotate(2 244 169)" />
    <path d="M416 187L633 193.500" stroke="#ff0000" stroke-width="2.400" fill="none" />
    <path d="M646 194l-15-7v14z" fill="#ff0000" />
    <text class="f12" x="670" y="220" textLength="74" lengthAdjust="spacingAndGlyphs">F12</text>
    <path d="M705.700 230L775 610" stroke="#ff0000" stroke-width="2.600" fill="none" />
    <path d="M778 625l-8-14 13-2z" fill="#ff0000" />
    <path d="M602.700 394L600 455" stroke="#a00000" stroke-width="1.300" fill="none" />
    <path d="M599 468l-4.500-10h9z" fill="#ff0000" />
    <rect x="794" y="575" width="270" height="76" rx="14" fill="none" stroke="#f01010" stroke-width="2.400" />
    <text class="beam" x="921" y="628" text-anchor="middle" textLength="90" lengthAdjust="spacingAndGlyphs">连梁</text>
  </svg>
</div>

<style>
  :global(body) {
    margin: 0;
    background: #f0f0f0;
  }

  .app {
    position: relative;
    width: 1698px;
    height: 879px;
    overflow: hidden;
    background: #f0f0f0;
    color: #111;
    font: 12px/16px "Noto Sans CJK SC", "Liberation Sans", sans-serif;
  }

  .menubar {
    display: flex;
    justify-content: space-between;
    align-items: center;
    height: 30px;
  }

  .menu {
    display: flex;
    align-items: center;
    padding-left: 4px;
    gap: 10.600px;
    white-space: nowrap;
  }

  .item.mi {
    gap: 1px;
    padding: 0;
  }

  .item.mi.second {
    margin-left: -5px;
    gap: 5px;
  }

  .item.mi .caret {
    margin-left: 8px;
  }

  .tip {
    width: 184px;
    height: 27px;
    margin-right: 5px;
    line-height: 27px;
    text-align: center;
    color: #0c6a6a;
    background: linear-gradient(#f6f6f6, #fdfdfd);
    border-radius: 3px;
  }

  .toolrow {
    display: flex;
    align-items: center;
    white-space: nowrap;
  }

  .toolrow.top {
    height: 30px;
    gap: 2px;
  }

  .pill {
    display: flex;
    align-items: center;
    height: 26px;
    background: linear-gradient(#fcfcfc, #f3f3f3);
    border-radius: 3px;
  }

  .pill.first {
    width: 155px;
  }

  .pill.first .item {
    padding: 0 3px;
  }

  .pill.main1,
  .pill.view1 {
    padding: 0 2px;
  }

  .item {
    display: inline-flex;
    align-items: center;
    gap: 4px;
    padding: 0 3.5px;
    height: 22px;
    box-sizing: border-box;
    flex: none;
  }

  .item.off {
    color: #a8a8a8;
  }

  .item.on {
    background: #e6f1fd;
    outline: 1px solid #3a8be8;
    outline-offset: -1px;
    margin: 0 1px;
  }

  .item.narrow {
    gap: 0;
    padding-right: 6px;
    margin-right: 0;
  }

  .item.white {
    background: #fff;
  }

  .ic {
    width: 16px;
    height: 16px;
    flex: none;
  }

  .caret {
    display: block;
    width: 0;
    height: 0;
    margin-left: 3px;
    border: 3px solid transparent;
    border-top: 4px solid #111;
    border-bottom: 0;
    flex: none;
  }

  .caret.tight,
  .caret.flush {
    margin-left: 0;
  }

  .sep {
    flex: none;
    width: 1px;
    height: 20px;
    margin: 0 3.5px;
    background: #c4c4c4;
  }

  .r2 .sep {
    margin: 0 2.5px;
  }

  .r4 .sep {
    margin: 0 2px;
  }

  .body {
    display: flex;
    height: 819px;
  }

  .nav {
    display: flex;
    flex-direction: column;
    width: 159px;
    flex: none;
    border-right: 2px solid #a2a2a2;
    background: #fff;
  }

  .ptitle {
    display: flex;
    align-items: center;
    height: 14px;
    box-sizing: border-box;
    margin: 2px 0;
    border: solid #a0a0a0;
    border-width: 1px 0;
    border-radius: 2px;
    background: #f0f0f0;
    white-space: nowrap;
  }

  .ptext {
    flex: 1;
    margin-left: -1px;
    font-size: 12px;
    line-height: 12px;
  }

  .ptext.cad {
    margin-left: -2px;
  }

  .pin {
    width: 10px;
    height: 12px;
    margin-right: 8px;
  }

  .pclose {
    width: 16px;
    margin-right: 1px;
    text-align: center;
    font: 15px/12px "Liberation Sans", sans-serif;
    color: #333;
  }

  .pclose.boxed {
    border: 1px solid #222;
    border-width: 0 1px 1px 0;
  }

  .big {
    height: 22px;
    padding: 0;
    border: solid #a8a8a8;
    border-width: 1px 0 1px 0;
    background: linear-gradient(#f4f4f4, #e4e4e4);
    font: inherit;
    color: inherit;
  }

  .big.first-b {
    height: 21px;
    margin-bottom: 1px;
  }

  .navtools {
    display: flex;
    align-items: center;
    gap: 5px;
    height: 26px;
    margin-top: 1px;
    padding-left: 4px;
    border-bottom: 1px solid #a8a8a8;
    background: linear-gradient(#fafafa, #ebebeb);
  }

  .tree {
    flex: 1;
    padding-top: 1px;
    background: #fff;
  }

  .trow {
    display: flex;
    align-items: center;
    height: 16px;
    white-space: nowrap;
  }

  .lead {
    display: inline-flex;
    align-items: center;
    width: 23px;
    padding-left: 8px;
    box-sizing: border-box;
    flex: none;
  }

  .exp {
    width: 10px;
    height: 10px;
    flex: none;
  }

  .ddots {
    width: 6px;
    height: 0;
    flex: none;
    border-bottom: 1px dotted #777;
  }

  .ddots.nav {
    width: 5px;
  }

  .folder {
    margin-right: 5px;
  }

  .cadbox {
    margin-left: 7px;
  }

  .new {
    display: inline-block;
    align-self: flex-start;
    margin-top: -1px;
    padding: 0 1px;
    background: #fff200;
    font: 700 8px/9px "Liberation Sans", sans-serif;
    color: #111;
  }

  .guide {
    width: 43px;
    height: 16px;
    flex: none;
  }

  .node {
    display: inline-flex;
    align-items: center;
    gap: 4px;
    height: 16px;
    padding-right: 5px;
    border-radius: 3px;
  }

  .node.sel {
    box-shadow: 0 0 0 1px #c8c8c8;
    background: linear-gradient(#fdfdfd, #f1f1f1);
  }

  .kid em {
    margin-left: 1px;
    font: 11px/16px "Liberation Mono", monospace;
    letter-spacing: -0.6px;
  }

  .list {
    display: flex;
    flex-direction: column;
    width: 163px;
    flex: none;
    margin-left: 6px;
  }

  .listtools {
    display: flex;
    align-items: center;
    height: 25px;
    background: linear-gradient(#fbfbfb, #ececec);
    padding-left: 1px;
  }

  .x {
    width: 14px;
    height: 14px;
    margin-left: 4px;
    margin-right: 6px;
  }

  .search {
    display: flex;
    align-items: center;
    height: 23px;
    margin-top: 2px;
    background: linear-gradient(#f8f8f8, #e6e6e6);
  }

  .sfield {
    width: 136px;
    height: 23px;
    line-height: 22px;
    padding-left: 3px;
    box-sizing: border-box;
    background: #fff;
    color: #9a9a9a;
    border-radius: 2px;
    white-space: nowrap;
    overflow: hidden;
  }

  .sbtn {
    width: 15px;
    height: 15px;
    margin-left: 6px;
  }

  .ctree {
    height: 364px;
    margin-top: 2px;
    padding-top: 2px;
    box-sizing: content-box;
    background: #fff;
    border: 1px solid #a0a0a0;
  }

  .crow {
    display: flex;
    align-items: center;
    height: 16px;
    padding-left: 32px;
    white-space: nowrap;
  }

  .crow.root {
    padding-left: 9px;
    gap: 0;
  }

  .croot {
    margin-left: 4px;
  }

  .crow.root .ddots {
    width: 4px;
    margin-right: 1px;
  }

  .cguide {
    width: 8px;
    height: 16px;
    flex: none;
  }

  .cnode {
    display: inline-flex;
    align-items: center;
    gap: 7.500px;
    width: 75px;
    height: 16px;
    padding-left: 2.500px;
    box-sizing: border-box;
    font: 11px/16px "Liberation Mono", monospace;
    letter-spacing: -0.7px;
  }

  .cnode.sel {
    background: #316ac5;
    color: #fff;
  }

  .gear {
    width: 13px;
    height: 13px;
    flex: none;
  }

  .ptitle.second {
    margin-top: 8px;
  }

  .tabs {
    display: flex;
    align-items: flex-end;
    height: 20px;
    white-space: nowrap;
  }

  .tab {
    width: 42px;
    height: 18px;
    box-sizing: border-box;
    padding-left: 2px;
    border: 1px solid #a8a8a8;
    border-width: 1px 1px 0 0;
    background: #e8e8e8;
    overflow: hidden;
  }

  .tab.active {
    width: 87px;
    height: 20px;
    padding-left: 7px;
    background: #fcfcfc;
    border-left: 1px solid #a8a8a8;
  }

  .tabnav {
    display: flex;
    gap: 1px;
    align-self: flex-start;
    margin-left: 1px;
    height: 17px;
  }

  .tabnav i {
    width: 15px;
    text-align: center;
    font-style: normal;
    font-size: 10px;
    color: #4a6fa8;
    background: linear-gradient(#f4f4f4, #dcdcdc);
    border: 1px solid #c4c4c4;
  }

  .tabbody {
    height: 36px;
    box-sizing: border-box;
    border: 1px solid #a0a0a0;
    padding: 4px 3px 0 4px;
    background: #f6f6f6;
  }

  .drawbtns {
    display: flex;
    height: 22px;
    white-space: nowrap;
  }

  .dbtn {
    display: flex;
    align-items: center;
    justify-content: center;
    width: 57px;
    margin-right: 1px;
    background: #e6e6e6;
    border: 1px solid #c0c0c0;
    box-sizing: border-box;
  }

  .dbtn.small {
    width: 12px;
  }

  .dbtn.more {
    width: 12px;
    margin-left: auto;
    margin-right: 0;
    font-weight: 700;
  }

  .thinbar {
    height: 4px;
    margin-top: 2px;
    border: 1px solid #bcbcbc;
    background: #fff;
    box-sizing: border-box;
  }

  .ptitle.third {
    margin-top: 9px;
  }

  .cadtree {
    flex: 1;
    padding: 1px 0 0 9px;
    background: #fff;
    border: 1px solid #a0a0a0;
  }

  .cadrow {
    display: flex;
    align-items: center;
    gap: 0;
    height: 14px;
    white-space: nowrap;
  }

  .cadrow .ddots {
    margin-right: 1px;
    width: 5px;
  }

  .cadrow .chk {
    margin-right: 3px;
  }

  .work {
    display: flex;
    flex-direction: column;
    flex: 1;
    margin-left: 4px;
    min-width: 0;
  }

  .r2 {
    height: 28px;
    padding-top: 1px;
    box-sizing: border-box;
  }

  .r3 {
    height: 29px;
    gap: 2px;
  }

  .r4 {
    height: 28px;
  }

  .r2 .pill,
  .r3 .pill,
  .r4 .pill {
    height: 25px;
  }

  .grip {
    flex: none;
    width: 2px;
    height: 14px;
    margin: 0 1.500px 0 4px;
    background: repeating-linear-gradient(#b0b0b0 0 2px, transparent 2px 4px);
  }

  .aux .grip {
    margin-left: 2px;
  }

  .grip.lone {
    margin-left: 6px;
  }

  .endcap {
    width: 24px;
    height: 25px;
    margin-left: 1px;
    background: linear-gradient(#fff, #f5f5f5);
  }

  .pill.left {
    padding-left: 8px;
    gap: 0;
  }

  .combo {
    display: inline-flex;
    align-items: center;
    height: 23px;
    margin-right: 3px;
    background: #fff;
    flex: none;
    overflow: hidden;
  }

  .r4 .combo {
    margin-right: 0;
  }

  .combo-text {
    flex: 1;
    min-width: 0;
    padding-left: 3px;
    white-space: nowrap;
    overflow: hidden;
  }

  .combo-btn {
    display: flex;
    align-items: center;
    justify-content: center;
    width: 11px;
    height: 23px;
    flex: none;
    background: #f3f3f3;
  }

  .canvas {
    display: block;
    flex: none;
    background: #000;
  }

  .num text {
    font: 17.500px "Liberation Sans", sans-serif;
    fill: #c8c8c8;
    text-anchor: middle;
    dominant-baseline: central;
  }

  .dialog {
    position: absolute;
    left: 716px;
    top: 321px;
    width: 484px;
    height: 393px;
    box-sizing: border-box;
    padding: 0 5px 5px;
    border: 1px solid #9a9a9a;
    border-radius: 6px;
    background: rgba(14, 14, 14, 0.72);
    backdrop-filter: blur(5px);
    box-shadow: inset 0 0 0 1px #111;
    display: flex;
    flex-direction: column;
  }

  .dtitle {
    display: flex;
    align-items: flex-start;
    height: 27px;
    flex: none;
  }

  .dicon {
    width: 15px;
    height: 15px;
    margin: 5px 6px 0 1px;
    flex: none;
  }

  .dcaption {
    margin-top: 4px;
    padding: 0 3px;
    color: #111;
    white-space: nowrap;
    text-shadow: 0 0 5px #a8a8a8, 0 0 8px #a8a8a8;
    background: rgba(150, 150, 150, 0.38);
    box-shadow: 0 0 8px 3px rgba(150, 150, 150, 0.38);
  }

  .winbtns {
    display: flex;
    height: 19px;
    margin-left: auto;
    margin-right: 0;
    border: 1px solid rgba(190, 190, 190, 0.55);
    border-top: 0;
    border-radius: 0 0 4px 4px;
    box-sizing: border-box;
  }

  .wb {
    display: flex;
    align-items: center;
    justify-content: center;
    width: 28px;
    border-right: 1px solid rgba(190, 190, 190, 0.55);
  }

  .wb.wide {
    width: 46px;
    border-right: 0;
  }

  .wmin {
    width: 10px;
    height: 3px;
    margin-top: 4px;
    background: #888;
  }

  .wmax {
    width: 6px;
    height: 4px;
    border: 2px solid #eee;
  }

  .client {
    flex: 1;
    display: flex;
    flex-direction: column;
    padding: 7px 5px 0 10px;
    background: #f0f0f0;
    border: 1px solid #222;
  }

  .groups {
    display: flex;
    gap: 11px;
  }

  fieldset {
    width: 223px;
    height: 295px;
    margin: 0;
    padding: 0 7px;
    box-sizing: border-box;
    border: 1px solid #dcdcdc;
    border-radius: 3px;
    min-width: 0;
  }

  legend {
    margin-left: 0;
    padding: 0;
    height: 13px;
    line-height: 12px;
    white-space: nowrap;
    background: #f0f0f0;
  }

  .lbox {
    display: grid;
    grid-template-columns: 1fr 15px;
    grid-template-rows: 257px 18px;
    width: 208px;
    height: 277px;
    box-sizing: border-box;
    margin-top: 9px;
    border: 1px solid #828790;
    background: #fff;
  }

  .ltree {
    overflow: hidden;
    padding-top: 1px;
  }

  .drow {
    display: flex;
    align-items: center;
    height: 16px;
    white-space: nowrap;
  }

  .drow.lv0 {
    padding-left: 9px;
  }

  .drow.lv1 {
    padding-left: 28px;
  }

  .drow .exp {
    width: 8px;
    height: 8px;
  }

  .drow .ddots {
    width: 6px;
    margin-left: 1px;
    margin-right: 0;
  }

  .dguide {
    width: 63px;
    height: 16px;
    flex: none;
  }

  .drow .ic {
    width: 14px;
    height: 14px;
    margin-left: 3px;
  }

  .drow.lv0 .ic,
  .drow.lv1 .ic {
    margin-left: 2px;
  }

  .dlabel {
    margin-left: 6px;
  }

  .chk {
    display: inline-block;
    flex: none;
    width: 12px;
    height: 12px;
    box-sizing: border-box;
    border: 1px solid #8e8f8f;
    background: linear-gradient(135deg, #dedede, #f8f8f8);
    box-shadow: inset 0 0 0 1px #fff;
  }

  .chk svg {
    display: block;
    width: 10px;
    height: 10px;
  }

  .chk.m {
    background: linear-gradient(135deg, #1f6fae, #3aa0d8);
  }

  .vbar {
    display: flex;
    flex-direction: column;
    background: #f5f5f5;
  }

  .vbar .arrow {
    width: 15px;
    height: 16px;
    flex: none;
  }

  .vthumb {
    display: flex;
    flex-direction: column;
    align-items: center;
    justify-content: center;
    gap: 1px;
    height: 51px;
    margin-top: 2px;
    border: 1px solid #b4b4b4;
    border-radius: 2px;
    box-sizing: border-box;
    background: linear-gradient(90deg, #f6f6f6, #dadada);
  }

  .vthumb span {
    width: 6px;
    height: 1px;
    background: #555;
  }

  .grow {
    flex: 1;
  }

  .hbar {
    grid-column: 1 / 3;
    display: flex;
    align-items: center;
    padding-left: 2px;
    background: #fff;
  }

  .hbar .arrow {
    width: 16px;
    height: 15px;
    flex: none;
  }

  .hbar .arrow.last {
    margin-left: 6px;
  }

  .hthumb {
    width: 146px;
    height: 15px;
    flex: none;
    text-align: center;
    font: 700 9px/15px "Liberation Sans", sans-serif;
    color: #555;
    letter-spacing: 0;
    border: 1px solid #b4b4b4;
    border-radius: 2px;
    box-sizing: border-box;
    background: linear-gradient(#f6f6f6, #dadada);
  }

  .dbuttons {
    display: flex;
    margin-top: 16px;
    padding-left: 64px;
  }

  .wbtn {
    width: 71px;
    height: 22px;
    padding: 0;
    border: 1px solid #8a8a8a;
    border-radius: 3px;
    background: linear-gradient(#f4f4f4 45%, #dcdcdc 55%, #e8e8e8);
    font: inherit;
    color: #111;
    margin-right: 9px;
  }

  .wbtn.reset {
    width: 93px;
    margin-right: 123px;
  }

  .wbtn.ok {
    border-color: #3c9ae0;
    box-shadow: inset 0 0 0 1px #a6dcf6;
  }

  .marks {
    position: absolute;
    left: 0;
    top: 0;
    pointer-events: none;
  }

  .f12 {
    font: 500 52px "Noto Sans", "Liberation Sans", sans-serif;
    fill: #ff0000;
  }

  .beam {
    font: 700 44px "Noto Sans CJK SC", sans-serif;
    fill: #ff0000;
  }
</style>
